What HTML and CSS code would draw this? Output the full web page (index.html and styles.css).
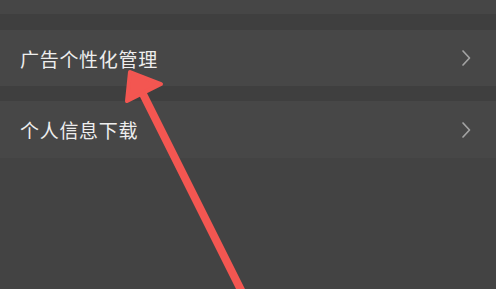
FILE: index.html
```html
<!DOCTYPE html>
<html lang="zh">
<head>
<meta charset="utf-8">
<link rel="stylesheet" href="styles.css">
</head>
<body>
<div class="page">
  <div class="top-band"></div>
  <div class="gap"></div>
  <div class="row">
    <span class="label">广告个性化管理</span>
    <svg class="chev" viewBox="0 0 10 18" width="10" height="18"><path d="M2 2 L8.5 9 L2 16" fill="none" stroke="#a3a3a3" stroke-width="1.7" stroke-linecap="round" stroke-linejoin="round"/></svg>
  </div>
  <div class="gap"></div>
  <div class="row">
    <span class="label">个人信息下载</span>
    <svg class="chev" viewBox="0 0 10 18" width="10" height="18"><path d="M2 2 L8.5 9 L2 16" fill="none" stroke="#a3a3a3" stroke-width="1.7" stroke-linecap="round" stroke-linejoin="round"/></svg>
  </div>
  <div class="rest"></div>
  <svg class="arrow" viewBox="0 0 496 289" width="496" height="289">
    <line x1="140" y1="88" x2="246" y2="300" stroke="#f35651" stroke-width="8" stroke-linecap="round"/>
    <polygon points="130,72 161,84 127,101" fill="#f35651" stroke="#f35651" stroke-width="4" stroke-linejoin="round"/>
  </svg>
</div>
</body>
</html>
```
FILE: styles.css
```css
html, body {
  margin: 0;
  padding: 0;
  background: #424242;
}
.page {
  position: relative;
  width: 496px;
  height: 289px;
  overflow: hidden;
  display: flex;
  flex-direction: column;
  font-family: "Noto Sans CJK SC", "Noto Sans", sans-serif;
}
.top-band {
  height: 14px;
  background: #464646;
}
.gap {
  height: 16px;
  background: #3f3f3f;
}
.gap + .row + .gap {
  height: 15px;
}
.row {
  height: 56px;
  background: #474747;
  display: flex;
  align-items: center;
  justify-content: space-between;
  padding: 0 25px 0 20px;
}
.row + .gap + .row {
  height: 57px;
}
.label {
  color: #eeeeee;
  font-size: 19px;
  font-weight: 400;
  letter-spacing: 0.7px;
  line-height: 1;
}
.chev {
  display: block;
}
.rest {
  flex: 1;
  background: #434343;
}
.arrow {
  position: absolute;
  left: 0;
  top: 0;
}
```
